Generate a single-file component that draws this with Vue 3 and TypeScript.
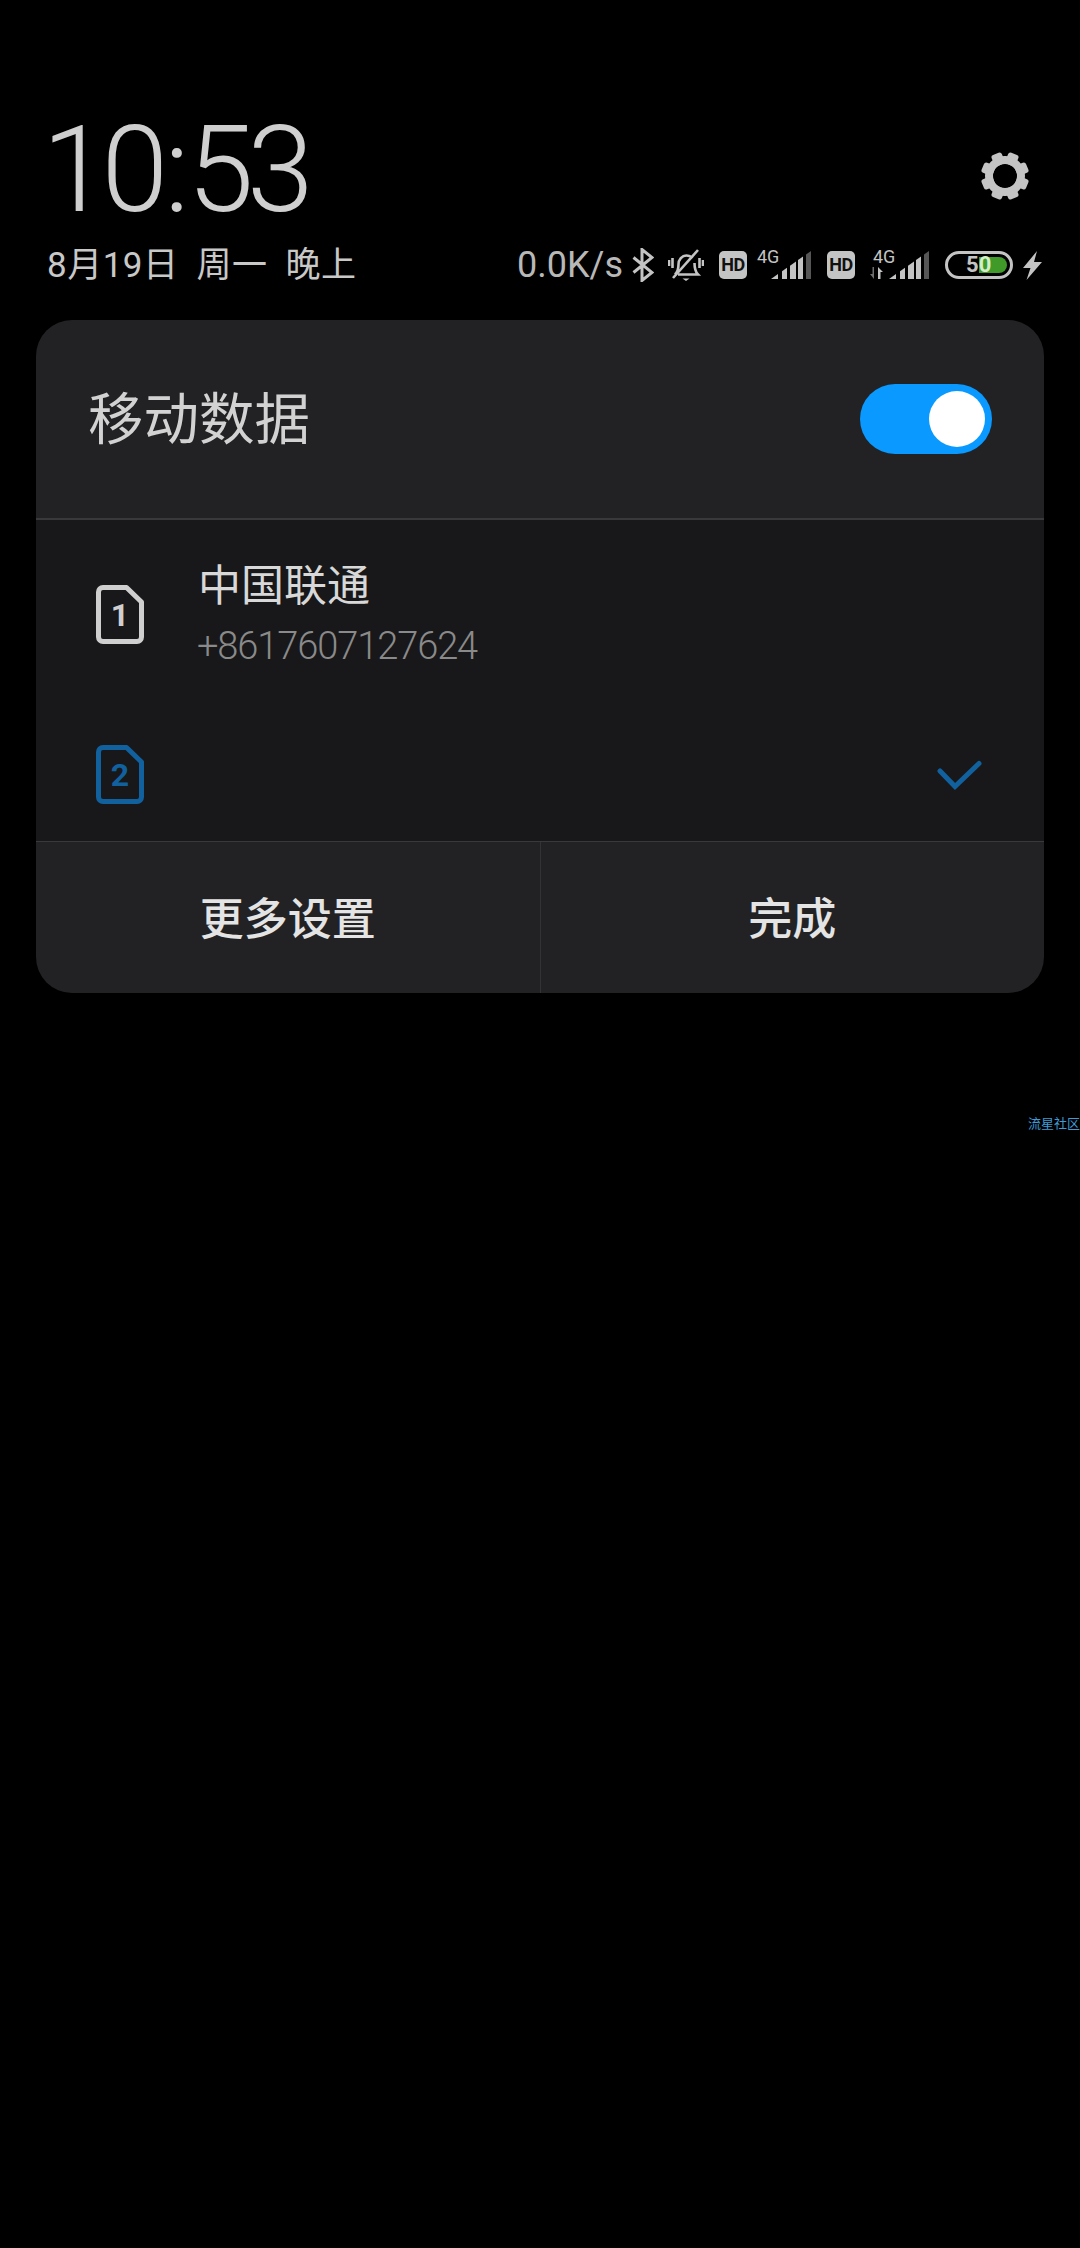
<script setup lang="ts">
const teeth: number[] = [22.5, 67.5, 112.5, 157.5, 202.5, 247.5, 292.5, 337.5]
const bars: string[] = [
  '0,28 7,23.1 7,28',
  '11,20.3 16,16.8 16,28 11,28',
  '19,14.7 25,10.5 25,28 19,28',
  '27,9.1 32,5.6 32,28 27,28'
]
const lastBar = '35,3.5 40,0 40,28 35,28'
</script>

<template>
  <div class="page" lang="zh-CN">
    <header class="top">
      <div class="clock-row">
        <div class="clock">10<span class="colon">:</span>53</div>
        <svg class="gear" width="48" height="48" viewBox="-24 -24 48 48">
          <rect v-for="a in teeth" :key="a" x="-5.5" y="-24" width="11" height="12" rx="2.5" fill="#c4c4c4" :transform="`rotate(${a})`" />
          <circle r="16" fill="none" stroke="#c4c4c4" stroke-width="8" />
        </svg>
      </div>
      <div class="status-row">
        <div class="date"><span>8月19日</span><span>周一</span><span>晚上</span></div>
        <div class="icons">
          <span class="speed">0.0K/s</span>
          <svg class="bt" width="22" height="34" viewBox="0 0 22 34" fill="none" stroke="#c4c4c4" stroke-width="3">
            <path d="M1.5 9.5 20 24.5 10 32.5V1.5L20 9.5 1.5 24.5" />
          </svg>
          <svg class="bell" width="36" height="32" viewBox="0 0 36 32" fill="none" stroke="#c4c4c4" stroke-width="2.6">
            <path d="M7 25.5c3-3 3.5-6 3.5-10 0-5 3.5-9 8-9 2.5 0 4.5 1 6 2.5M26.500 14c0 5 .5 8.500 3.500 11.500H10" />
            <path d="M30 1 5 29" />
            <path d="M1 11v6M4.500 9v10M31.500 9v10M35 11v6" />
            <path d="M14.500 29.500h7L18 32Z" fill="#c4c4c4" stroke="none" />
          </svg>
          <span class="hd">HD</span>
          <div class="net">
            <span class="g4">4G</span>
            <svg width="40" height="28" viewBox="0 0 40 28" class="signal">
              <polygon v-for="b in bars" :key="b" :points="b" fill="#c4c4c4" />
              <polygon :points="lastBar" fill="#565656" />
            </svg>
          </div>
          <span class="hd hd2">HD</span>
          <div class="net net2">
            <span class="g4">4G</span>
            <svg class="arrows" width="13" height="12" viewBox="0 0 13 12">
              <path d="M4 0v12L0 7h2.500V0Z" fill="#6e6e6e" />
              <path d="M8 12V0l5 5h-2.500v7Z" fill="#c4c4c4" />
            </svg>
            <svg width="40" height="28" viewBox="0 0 40 28" class="signal">
              <polygon v-for="b in bars" :key="b" :points="b" fill="#c4c4c4" />
              <polygon :points="lastBar" fill="#565656" />
            </svg>
          </div>
          <div class="battery">
            <div class="fill"></div>
            <span class="level"><span class="d5">5</span><span class="d0">0</span></span>
          </div>
          <svg class="bolt" width="19" height="29" viewBox="0 0 19 29">
            <path d="M14 0 0 17h7.500L3.500 29 19 11h-8Z" fill="#c4c4c4" />
          </svg>
        </div>
      </div>
    </header>

    <section class="card">
      <div class="head">
        <span class="title">移动数据</span>
        <div class="toggle"><div class="knob"></div></div>
      </div>
      <div class="body">
        <div class="sim first">
          <div class="sim-icon">
            <svg width="48" height="59" viewBox="0 0 48 59" fill="none" stroke="currentColor" stroke-width="5">
              <path d="M7 2.500H30.500L45.500 17V52a4.500 4.500 0 0 1-4.500 4.500H7A4.500 4.500 0 0 1 2.500 52V7A4.500 4.500 0 0 1 7 2.500Z" stroke-linejoin="round" />
            </svg>
            <span class="num">1</span>
          </div>
          <div class="sim-text">
            <div class="carrier">中国联通</div>
            <div class="phone">+8617607127624</div>
          </div>
        </div>
        <div class="sim second">
          <div class="sim-icon blue">
            <svg width="48" height="59" viewBox="0 0 48 59" fill="none" stroke="currentColor" stroke-width="5">
              <path d="M7 2.500H30.500L45.500 17V52a4.500 4.500 0 0 1-4.500 4.500H7A4.500 4.500 0 0 1 2.500 52V7A4.500 4.500 0 0 1 7 2.500Z" stroke-linejoin="round" />
            </svg>
            <span class="num">2</span>
          </div>
          <svg class="check" width="48" height="32" viewBox="0 0 48 32" fill="none" stroke="#11619f" stroke-width="5" stroke-linecap="round">
            <path d="M5 12 20 27.500 44 4.500" />
          </svg>
        </div>
      </div>
      <div class="foot">
        <div class="btn"><span>更多设置</span></div>
        <div class="btn"><span>完成</span></div>
      </div>
    </section>

    <div class="watermark">流星社区</div>
  </div>
</template>

<style scoped>
.page {
  position: relative;
  height: 2248px;
  background: #000;
  overflow: hidden;
  font-family: Roboto, "Noto Sans CJK SC", sans-serif;
  color: #c8c8c8;
}
.top {
  padding: 105px 36px 0 48px;
  height: 320px;
  box-sizing: border-box;
}
.clock-row {
  display: flex;
  justify-content: space-between;
  align-items: flex-start;
  height: 130px;
}
.clock {
  font-size: 120px;
  line-height: 130px;
  font-weight: 300;
  letter-spacing: -7px;
  color: #cfcfcf;
  margin-left: -6px;
}
.colon {
  margin: 0 5px 0 3px;
}
.gear {
  margin: 47px 15px 0 0;
}
.status-row {
  display: flex;
  justify-content: space-between;
  align-items: center;
  height: 40px;
  margin-top: 11px;
}
.date {
  display: flex;
  gap: 18px;
  font-size: 35px;
  line-height: 40px;
  letter-spacing: 0.5px;
  color: #c8c8c8;
  margin-left: -1px;
}
.icons {
  display: flex;
  align-items: center;
  margin-right: 2px;
  margin-top: -2px;
  height: 40px;
}
.speed {
  font-size: 36px;
  line-height: 40px;
  color: #b8b8b8;
  width: 115px;
}
.bt { margin-right: 14px; }
.bell { margin-right: 15px; }
.hd {
  width: 28px;
  height: 28px;
  border-radius: 5px;
  background: #c4c4c4;
  color: #111;
  font-size: 18px;
  font-weight: 700;
  line-height: 28px;
  text-align: center;
  letter-spacing: -0.5px;
}
.net {
  position: relative;
  width: 55px;
  height: 28px;
  margin-left: 9px;
}
.net .signal {
  position: absolute;
  right: 0;
  top: 0;
}
.g4 {
  position: absolute;
  left: 1px;
  top: -2px;
  font-size: 18px;
  line-height: 15px;
  color: #c4c4c4;
}
.hd2 { margin-left: 16px; }
.net2 {
  width: 57px;
  margin-left: 17px;
}
.arrows {
  position: absolute;
  left: -2px;
  bottom: 0;
}
.battery {
  position: relative;
  width: 68px;
  height: 28px;
  box-sizing: border-box;
  border: 3px solid #c4c4c4;
  border-radius: 14px;
  margin-left: 16px;
}
.fill {
  position: absolute;
  right: 3px;
  top: 3px;
  bottom: 3px;
  width: 28px;
  background: #3f9a2a;
  border-radius: 0 9px 9px 0;
}
.level {
  position: absolute;
  left: 18px;
  top: 0;
  line-height: 22px;
  font-size: 22px;
  font-weight: 700;
}
.d5 { color: #c4c4c4; }
.d0 { color: #d4efc8; }
.bolt { margin-left: 10px; }

.card {
  margin: 0 36px;
  border-radius: 36px;
  overflow: hidden;
  background: #222224;
}
.head {
  display: flex;
  justify-content: space-between;
  align-items: center;
  height: 198px;
  padding: 0 52px 0 52px;
  border-bottom: 2px solid #39393b;
}
.title {
  font-size: 55.500px;
  line-height: 70px;
  color: #d2d2d2;
  font-weight: 400;
  padding-top: 3px;
}
.toggle {
  width: 132px;
  height: 70px;
  border-radius: 35px;
  background: #0a99ff;
  display: flex;
  justify-content: flex-end;
  align-items: center;
  padding-right: 7px;
  box-sizing: border-box;
}
.knob {
  width: 56px;
  height: 56px;
  border-radius: 50%;
  background: #fff;
}
.body {
  height: 321px;
  background: #18181a;
  display: flex;
  flex-direction: column;
  padding: 0 52px 0 60px;
  box-sizing: border-box;
}
.sim {
  display: flex;
  align-items: center;
}
.first { margin-top: 41px; }
.first .sim-icon { margin-top: -2px; }
.second {
  margin-top: 76px;
  justify-content: space-between;
}
.sim-icon {
  position: relative;
  width: 48px;
  height: 59px;
  color: #cfcfcf;
  flex: none;
}
.sim-icon svg { display: block; }
.sim-icon.blue { color: #11619f; }
.num {
  position: absolute;
  inset: 0;
  text-align: center;
  font-size: 32px;
  font-weight: 700;
  line-height: 60px;
}
.sim-text {
  margin-left: 54px;
}
.carrier {
  font-size: 43px;
  line-height: 50px;
  color: #d8d8d8;
  font-weight: 400;
}
.phone {
  font-size: 38px;
  line-height: 46px;
  font-weight: 300;
  letter-spacing: -1.100px;
  color: #8a8a8a;
  margin-top: 12px;
  margin-left: -1px;
}
.check { margin-right: 9px; }
.foot {
  display: flex;
  height: 151px;
  border-top: 1px solid #39393b;
}
.btn {
  flex: 1;
  display: flex;
  align-items: center;
  justify-content: center;
  font-size: 44px;
  font-weight: 500;
  color: #e4e4e4;
  padding-bottom: 4px;
}
.btn + .btn {
  border-left: 1px solid #333335;
}
.watermark {
  position: absolute;
  right: 0;
  top: 1116px;
  width: 52px;
  font-size: 13px;
  line-height: 15px;
  white-space: nowrap;
  color: #3f9bd6;
}
</style>

<style>
html, body { background: #000; }
</style>
